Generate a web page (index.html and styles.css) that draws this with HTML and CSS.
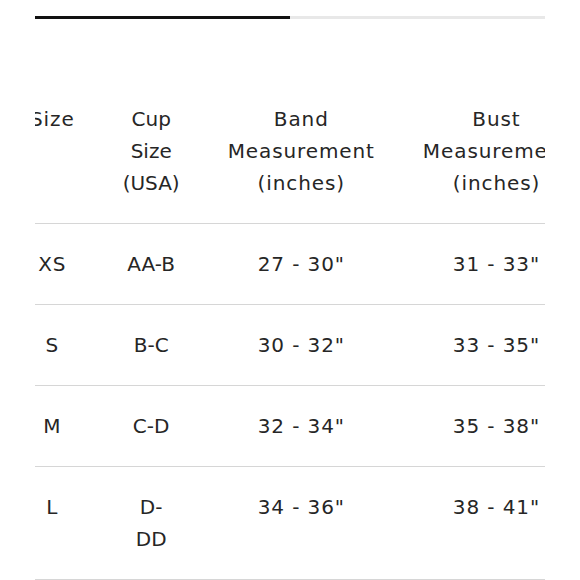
FILE: index.html
```html
<!DOCTYPE html>
<html lang="en">
<head>
<meta charset="utf-8">
<title>Size Chart</title>
<link rel="stylesheet" href="styles.css">
</head>
<body>
<div class="page">
  <div class="progress"><div class="progress-fill"></div></div>
  <div class="table-wrap">
    <table class="chart">
      <thead>
        <tr>
          <th class="c-size">Size</th>
          <th class="c-cup">Cup Size (USA)</th>
          <th class="c-band">Band Measurement (inches)</th>
          <th class="c-bust">Bust Measurement (inches)</th>
        </tr>
      </thead>
      <tbody>
        <tr><td>XS</td><td class="cup">AA-B</td><td>27 - 30"</td><td>31 - 33"</td></tr>
        <tr><td>S</td><td class="cup">B-C</td><td>30 - 32"</td><td>33 - 35"</td></tr>
        <tr><td>M</td><td class="cup">C-D</td><td>32 - 34"</td><td>35 - 38"</td></tr>
        <tr><td>L</td><td class="cup">D-<br>DD</td><td>34 - 36"</td><td>38 - 41"</td></tr>
      </tbody>
    </table>
  </div>
</div>
</body>
</html>
```

FILE: styles.css
```css
html, body {
  margin: 0;
  padding: 0;
  background: #ffffff;
}

body {
  font-family: "DejaVu Sans", "Liberation Sans", sans-serif;
  color: #262626;
}

.page {
  padding: 16px 35px 0 35px;
}

.progress {
  height: 3px;
  background: #e8e8e8;
}

.progress-fill {
  width: 50%;
  height: 100%;
  background: #111111;
}

.table-wrap {
  margin-top: 59px;
  overflow: hidden;
}

.chart {
  width: max-content;
  border-collapse: collapse;
  margin-left: -29px;
}

.chart th,
.chart td {
  padding: 24px;
  font-size: 20px;
  line-height: 32px;
  font-weight: normal;
  letter-spacing: 0.9px;
  text-align: center;
  vertical-align: top;
  border-bottom: 1px solid #d6d6d6;
}

.chart th {
  padding-top: 25px;
}

.chart .c-cup,
.chart .cup {
  letter-spacing: 0;
}

.c-size { width: 44px; }
.c-cup { width: 56px; }
.c-band { width: 147px; }
.c-bust { width: 147px; }
```
